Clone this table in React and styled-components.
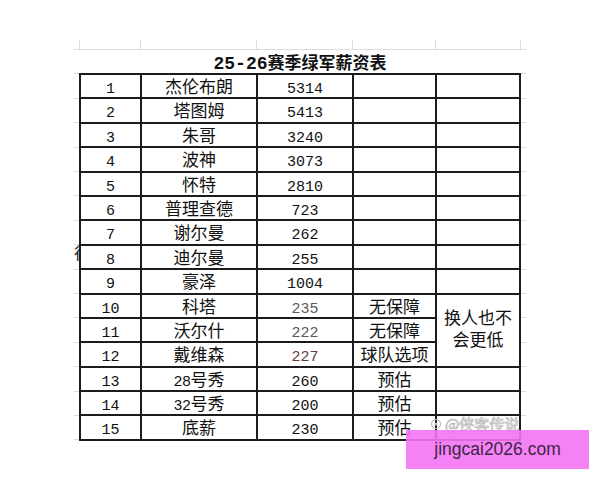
import styled, { createGlobalStyle } from "styled-components";

const GlobalStyle = createGlobalStyle`
  html, body {
    margin: 0;
    padding: 0;
    background: #fff;
  }
  body {
    font-family: "Noto Sans CJK SC", "Noto Sans", sans-serif;
    color: #111;
  }
`;

const rows = [
  { no: 1, name: "杰伦布朗", pay: "5314" },
  { no: 2, name: "塔图姆", pay: "5413" },
  { no: 3, name: "朱哥", pay: "3240" },
  { no: 4, name: "波神", pay: "3073" },
  { no: 5, name: "怀特", pay: "2810" },
  { no: 6, name: "普理查德", pay: "723" },
  { no: 7, name: "谢尔曼", pay: "262" },
  { no: 8, name: "迪尔曼", pay: "255" },
  { no: 9, name: "豪泽", pay: "1004" },
  { no: 10, name: "科塔", pay: "235", tone: "#5a5a5a", note: "无保障" },
  { no: 11, name: "沃尔什", pay: "222", tone: "#5a5a5a", note: "无保障" },
  { no: 12, name: "戴维森", pay: "227", tone: "#6b3c3c", note: "球队选项" },
  { no: 13, name: ["28", "号秀"], pay: "260", note: "预估" },
  { no: 14, name: ["32", "号秀"], pay: "200", note: "预估" },
  { no: 15, name: "底薪", pay: "230", note: "预估" },
];

const cols = "59px 114px 94px 81px 82px";

const Page = styled.div`
  position: relative;
  width: 600px;
  height: 480px;
  overflow: hidden;
  padding-top: 40px;
  box-sizing: border-box;
`;

const Sheet = styled.div`
  position: relative;
  margin-left: 74px;
  width: 442px;
  padding: 0 5px 6px;
  background-image: repeating-linear-gradient(
    180deg,
    #dcdcdc 0 1px,
    transparent 1px 24.4px
  );
  background-position: 0 9px;
`;

const TopStrip = styled.div`
  display: grid;
  grid-template-columns: ${cols};
  column-gap: 2px;
  height: 9px;
  padding: 0 2px;
`;

const StripCell = styled.div`
  border-left: 1px solid #dcdcdc;
  margin-left: -2px;
  &:last-child {
    border-right: 1px solid #dcdcdc;
    margin-right: -2px;
  }
`;

const Title = styled.div`
  height: 23px;
  background: #fff;
  border-top: 1px solid #dcdcdc;
  text-align: center;
  line-height: 23px;
  font-size: 17px;
  font-weight: 700;
`;

const Digits = styled.span`
  font-family: "Liberation Mono", monospace;
  font-size: ${(p) => p.$size || 15}px;
  font-weight: inherit;
  letter-spacing: ${(p) => (p.$tight ? "-0.6px" : "0")};
`;

const Grid = styled.div`
  display: grid;
  grid-template-columns: ${cols};
  grid-auto-rows: 22.4px;
  gap: 2px;
  padding: 2px;
  background: #1c1c1c;
`;

const Cell = styled.div`
  background: #fff;
  text-align: center;
  font-size: 17px;
  line-height: 22px;
  color: ${(p) => p.$tone || "#111"};
  white-space: nowrap;
`;

const Merged = styled(Cell)`
  grid-column: 5;
  grid-row: 10 / span 3;
  display: flex;
  flex-direction: column;
  justify-content: center;
  white-space: normal;
  line-height: 22px;
  padding-bottom: 4px;
`;

const LeftStub = styled.span`
  position: absolute;
  left: 0;
  top: 204px;
  width: 5px;
  overflow: hidden;
  font-size: 17px;
  line-height: 1;
  color: #222;
`;

const Watermark = styled.div`
  position: absolute;
  left: 430px;
  top: 413px;
  display: flex;
  align-items: center;
  gap: 3px;
  font-size: 15px;
  color: rgba(255, 255, 255, 0.6);
  -webkit-text-stroke: 0.7px #b4b4b4;
`;

const Badge = styled.div`
  position: absolute;
  left: 406px;
  top: 430px;
  width: 183px;
  height: 39px;
  background: rgba(244, 116, 244, 0.9);
  display: flex;
  align-items: center;
  justify-content: center;
  font-family: "Liberation Sans", Arial, sans-serif;
  font-size: 17.5px;
  color: #3b2546;
`;

function Name({ value }) {
  if (Array.isArray(value)) {
    return (
      <>
        <Digits $tight>{value[0]}</Digits>
        {value[1]}
      </>
    );
  }
  return value;
}

function RowCells({ r }) {
  const showLast = r.no < 10 || r.no > 12;
  return (
    <>
      <Cell>
        <Digits>{r.no}</Digits>
      </Cell>
      <Cell>
        <Name value={r.name} />
      </Cell>
      <Cell $tone={r.tone}>
        <Digits>{r.pay}</Digits>
      </Cell>
      <Cell>{r.note || ""}</Cell>
      {showLast && <Cell />}
    </>
  );
}

export default function App() {
  return (
    <>
      <GlobalStyle />
      <Page>
        <Sheet>
          <TopStrip>
            {[0, 1, 2, 3, 4].map((i) => (
              <StripCell key={i} />
            ))}
          </TopStrip>
          <Title>
            <Digits $size={18}>25-26</Digits>赛季绿军薪资表
          </Title>
          <Grid>
            {rows.map((r) => (
              <RowCells key={r.no} r={r} />
            ))}
            <Merged>
              <div>换人也不</div>
              <div>会更低</div>
            </Merged>
          </Grid>
          <LeftStub>很</LeftStub>
        </Sheet>
        <Watermark>
          <svg width="12" height="12" viewBox="0 0 12 12">
            <circle cx="6" cy="6" r="4.5" fill="none" stroke="#bcbcbc" strokeWidth="1.2" />
            <circle cx="6" cy="6" r="1.6" fill="#bcbcbc" />
          </svg>
          <span>@侠客传说</span>
        </Watermark>
        <Badge>jingcai2026.com</Badge>
      </Page>
    </>
  );
}
